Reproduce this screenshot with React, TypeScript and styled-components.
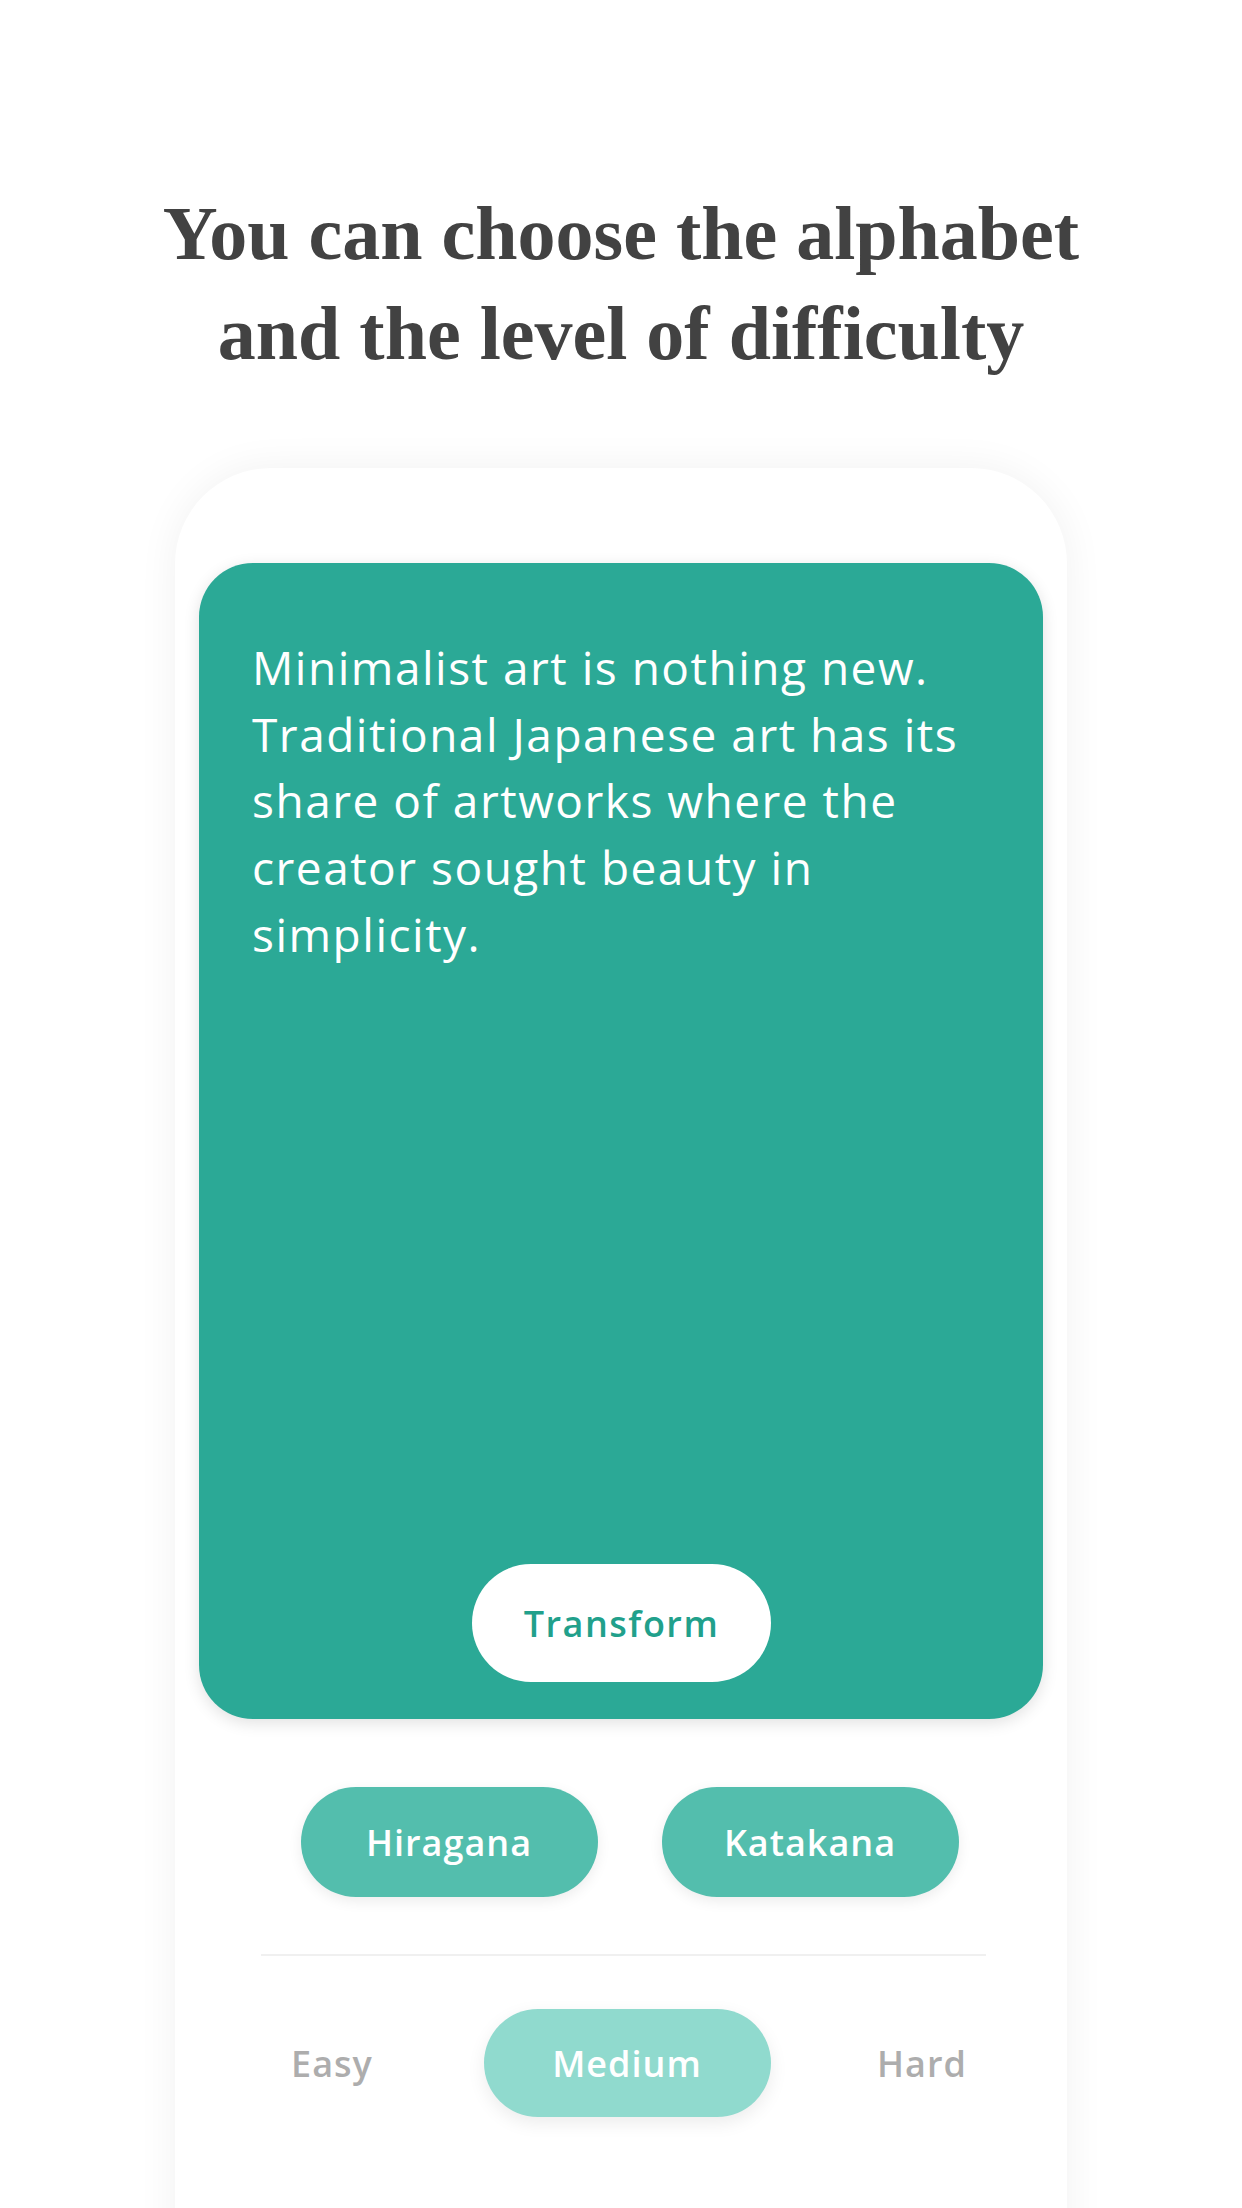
import React from "react";
import styled, { createGlobalStyle } from "styled-components";

const GlobalStyle = createGlobalStyle`
  html, body {
    margin: 0;
    padding: 0;
    background: #ffffff;
  }
  #root {
    height: 2208px;
    overflow: hidden;
  }
`;

const Page = styled.div`
  display: flex;
  flex-direction: column;
  align-items: center;
  padding-top: 183px;
`;

const Title = styled.h1`
  margin: 0;
  font-family: "Liberation Serif", "Times New Roman", serif;
  font-weight: 700;
  font-size: 76px;
  line-height: 100px;
  color: #424242;
  text-align: center;
`;

const Phone = styled.div`
  margin-top: 85px;
  width: 892px;
  min-height: 1900px;
  box-sizing: border-box;
  padding: 95px 24px 0;
  background: #ffffff;
  border-radius: 96px 96px 0 0;
  box-shadow: 0 0 40px rgba(0, 0, 0, 0.06);
  font-family: "Open Sans", "Lato", sans-serif;
`;

const Panel = styled.div`
  display: flex;
  flex-direction: column;
  height: 1156px;
  box-sizing: border-box;
  padding: 71px 52px 37px 53px;
  background: #2ba996;
  border-radius: 54px;
  box-shadow: 0 4px 16px rgba(0, 0, 0, 0.12);
`;

const Quote = styled.p`
  flex: 1;
  margin: 0;
  color: #ffffff;
  font-size: 46px;
  line-height: 66.7px;
  font-weight: 400;
  letter-spacing: 1.5px;
`;

const TransformButton = styled.button`
  align-self: center;
  width: 299px;
  height: 118px;
  border: none;
  border-radius: 59px;
  background: #ffffff;
  color: #21a08b;
  font-family: inherit;
  font-size: 36px;
  font-weight: 600;
  letter-spacing: 1.5px;
`;

const AlphabetRow = styled.div`
  display: flex;
  justify-content: center;
  gap: 64px;
  margin-top: 68px;
  padding-left: 17px;
`;

const AlphabetButton = styled.button`
  width: 297px;
  height: 110px;
  border: none;
  border-radius: 55px;
  background: #53bead;
  color: #ffffff;
  font-family: inherit;
  font-size: 36px;
  font-weight: 600;
  letter-spacing: 1px;
  box-shadow: 0 4px 14px rgba(0, 0, 0, 0.08);
`;

const Divider = styled.hr`
  width: 725px;
  margin: 57px auto 0;
  border: none;
  border-top: 2px solid #f0f0f0;
  position: relative;
  left: 2px;
`;

const LevelRow = styled.div`
  display: grid;
  grid-template-columns: repeat(3, 295px);
  justify-content: center;
  align-items: center;
  margin-top: 53px;
  padding-left: 12px;
`;

const Level = styled.button<{ $active?: boolean }>`
  justify-self: center;
  width: ${(p) => (p.$active ? "287px" : "auto")};
  height: 108px;
  border: none;
  border-radius: 54px;
  padding: 0;
  background: ${(p) => (p.$active ? "#90dace" : "transparent")};
  color: ${(p) => (p.$active ? "#ffffff" : "#adadad")};
  font-family: inherit;
  font-size: 36px;
  font-weight: 600;
  letter-spacing: 1px;
  box-shadow: ${(p) => (p.$active ? "0 6px 18px rgba(0, 0, 0, 0.08)" : "none")};
`;

const levels = ["Easy", "Medium", "Hard"];

export default function App() {
  return (
    <>
      <GlobalStyle />
      <Page>
        <Title>
          You can choose the alphabet
          <br />
          and the level of difficulty
        </Title>
        <Phone>
          <Panel>
            <Quote>
              Minimalist art is nothing new. Traditional Japanese art has its share of artworks where the creator
              sought beauty in simplicity.
            </Quote>
            <TransformButton>Transform</TransformButton>
          </Panel>
          <AlphabetRow>
            <AlphabetButton>Hiragana</AlphabetButton>
            <AlphabetButton>Katakana</AlphabetButton>
          </AlphabetRow>
          <Divider />
          <LevelRow>
            {levels.map((l) => (
              <Level key={l} $active={l === "Medium"}>
                {l}
              </Level>
            ))}
          </LevelRow>
        </Phone>
      </Page>
    </>
  );
}
